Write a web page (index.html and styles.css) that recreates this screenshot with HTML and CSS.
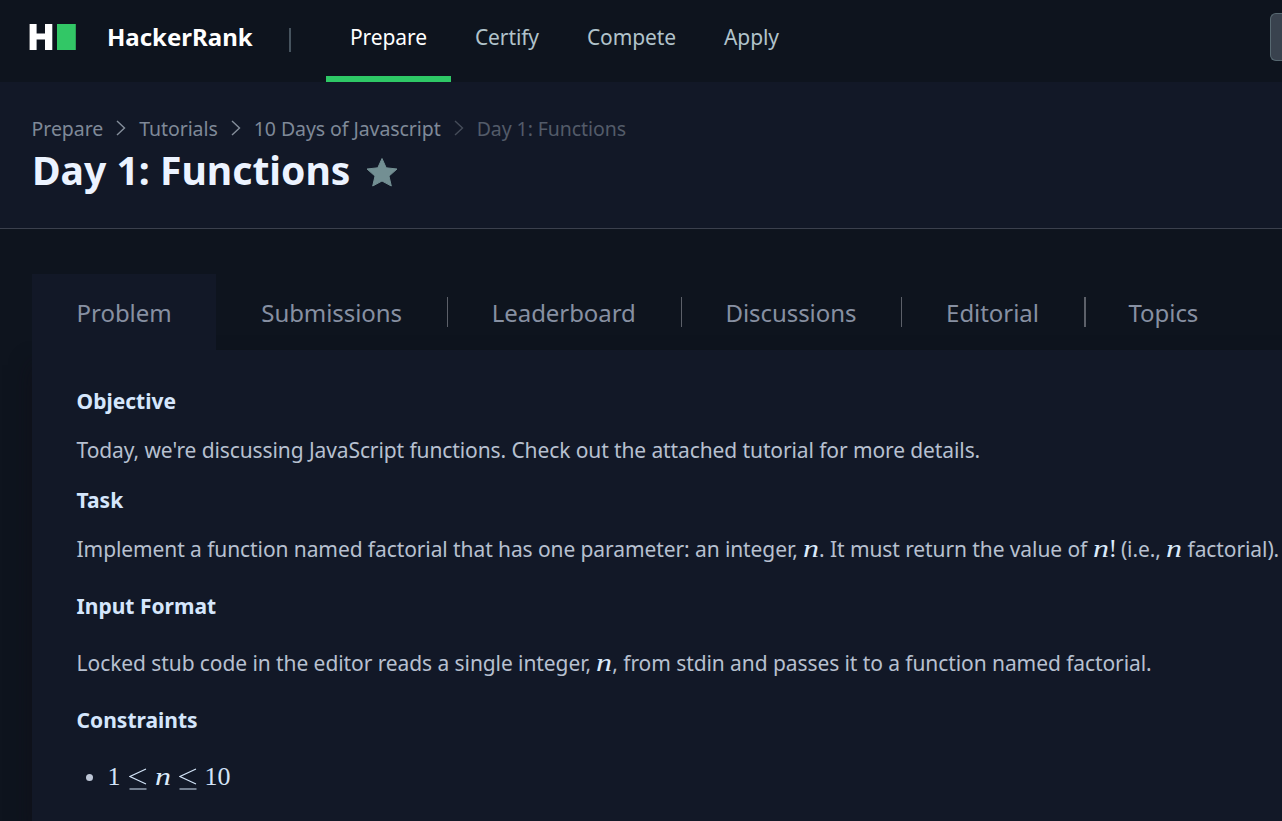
FILE: index.html
```
<!DOCTYPE html>
<html lang="en">
<head>
<meta charset="utf-8">
<title>Day 1: Functions | HackerRank</title>
<link rel="stylesheet" href="styles.css">
</head>
<body>
<header class="topbar">
  <a class="brand">
    <svg class="logo" width="48" height="26" viewBox="0 0 48 26"><path fill="#fff" d="M.6 0h7v9.600h8.400V0h7.300v26H16V15.600H7.600V26h-7z"/><path fill="#32c766" d="M28 0h18.800v26H28z"/></svg>
    <span class="brand-name">HackerRank</span>
  </a>
  <span class="separator"></span>
  <nav class="nav">
    <a class="nav-item active">Prepare</a>
    <a class="nav-item">Certify</a>
    <a class="nav-item">Compete</a>
    <a class="nav-item">Apply</a>
  </nav>
  <div class="search"></div>
</header>
<section class="heading">
  <div class="crumbs">
    <span>Prepare</span>
    <svg class="chevron" width="10" height="16" viewBox="0 0 10 16"><path d="M1 1l7.500 7L1 15"/></svg>
    <span>Tutorials</span>
    <svg class="chevron" width="10" height="16" viewBox="0 0 10 16"><path d="M1 1l7.500 7L1 15"/></svg>
    <span>10 Days of Javascript</span>
    <svg class="chevron dim" width="10" height="16" viewBox="0 0 10 16"><path d="M1 1l7.500 7L1 15"/></svg>
    <span class="dim">Day 1: Functions</span>
  </div>
  <div class="title-row">
    <h1>Day 1: Functions</h1>
    <svg class="star" width="32" height="30" viewBox="0 0 32 30"><path fill="#738f93" stroke="#738f93" stroke-linejoin="round" d="M16 1.500l4.200 9.300 10.800 1.200-8 7.100 2.300 9.900-9.300-5-9.300 5L9 19.100 1 12l10.800-1.200z"/></svg>
  </div>
</section>
<main class="content">
  <nav class="tabs">
    <a class="tab selected">Problem</a>
    <a class="tab">Submissions</a>
    <a class="tab ruled">Leaderboard</a>
    <a class="tab ruled">Discussions</a>
    <a class="tab ruled">Editorial</a>
    <a class="tab ruled thick">Topics</a>
  </nav>
  <article class="problem">
    <h2>Objective</h2>
    <p>Today, we're discussing JavaScript functions. Check out the attached tutorial for more details.</p>
    <h2>Task</h2>
    <p class="task">Implement a function named factorial that has one parameter: an integer, <i class="var">n</i>. It must return the value of <i class="var">n</i><span class="bang">!</span> (i.e., <i class="var">n</i> factorial).</p>
    <h2 class="spaced">Input Format</h2>
    <p class="spaced">Locked stub code in the editor reads a single integer, <i class="var">n</i>, from stdin and passes it to a function named factorial.</p>
    <h2 class="spaced">Constraints</h2>
    <ul class="constraints"><li><span class="math"><span>1</span><svg class="leq" width="18" height="22" viewBox="0 0 18 22"><path d="M17 1L1 8.500l16 7.500M.5 21h17"/></svg><i class="var">n</i><svg class="leq" width="18" height="22" viewBox="0 0 18 22"><path d="M17 1L1 8.500l16 7.500M.5 21h17"/></svg><span>10</span></span></li></ul>
  </article>
</main>
</body>
</html>
```
FILE: styles.css
```
* { box-sizing: border-box; }
body {
  margin: 0;
  height: 821px;
  overflow: hidden;
  background: #0e141e;
  color: #b7c0d0;
  font-family: "Noto Sans", sans-serif;
  font-size: 21px;
}
.topbar { display: flex; height: 82px; background: #0e141e; }
.brand { display: flex; align-items: flex-start; width: 288px; padding: 24px 0 0 29px; }
.logo { flex: none; }
.brand-name { margin: -1px 0 0 30px; line-height: 28px; font-size: 24px; font-weight: 700; color: #fff; }
.separator { width: 2px; height: 24px; margin: 28px 35.5px 0 .5px; background: #46535e; }
.nav { display: flex; flex: 1; letter-spacing: -.1px; }
.nav-item { height: 82px; padding: 23px 24px 0; line-height: 28px; color: #b1c3cb; white-space: nowrap; }
.nav-item.active { color: #fff; border-bottom: 6px solid #2ec866; }
.search { width: 12px; height: 48px; margin-top: 13px; border: 1px solid #576871; border-right: 0; border-radius: 6px 0 0 6px; background: #39424e; }
.heading { height: 147px; padding: 32px 32px 0; background: #121827; border-bottom: 1px solid #3b404d; }
.crumbs { display: flex; align-items: center; height: 28px; margin-left: -.4px; font-size: 19.5px; letter-spacing: -.07px; color: #7f8998; white-space: nowrap; }
.chevron { flex: none; margin: 0 13px; fill: none; stroke: #858e9b; stroke-width: 1.4; }
.chevron.dim { stroke: #454c59; }
span.dim { color: #535b69; }
.title-row { display: flex; }
h1 { margin: 0; font-size: 39.1px; line-height: 56px; color: #ecf3ff; white-space: nowrap; }
.star { margin: 15px 0 0 15px; }
.content { padding: 45px 0 0 32px; }
.tabs { display: flex; height: 76px; font-size: 24px; letter-spacing: -.06px; color: #8790a2; }
.tab { position: relative; padding: 0 44.85px; line-height: 78px; white-space: nowrap; }
.tab.selected { padding-left: 44.6px; background: #121827; }
.tab.ruled::before { content: ""; position: absolute; left: 0; top: 23px; width: 1px; height: 30px; background: #5c6069; }
.tab.thick::before { width: 2px; }
.problem { height: 471px; padding: 37px 0 0 44.6px; background: #121827; box-shadow: 0 15px 20px rgba(18, 12, 20, .5); white-space: nowrap; }
h2 { margin: 0 0 21px; font-size: 21px; line-height: 28px; color: #d5e6fc; }
p { margin: 0 0 22px; line-height: 28px; letter-spacing: -.1px; }
p.task { margin-bottom: 29px; letter-spacing: -.09px; }
h2.spaced { margin-bottom: 29px; }
p.spaced { margin-bottom: 29px; letter-spacing: -.08px; }
.var { display: inline-block; width: 16px; font: italic 25px/20px "Liberation Serif", serif; color: #dbeafa; transform: scaleX(1.28); transform-origin: left; }
.bang { display: inline-block; width: 7px; font: 26px/20px "Liberation Serif", serif; color: #dbeafa; }
.constraints { list-style: none; margin: 0; padding: 0 0 0 9px; }
.constraints li { display: flex; align-items: center; height: 28px; }
.constraints li::before { content: ""; width: 7px; height: 7px; margin-right: 15px; border-radius: 50%; background: #bdc6d6; }
.math { display: flex; align-items: center; font: 26px/28px "Liberation Serif", serif; color: #d3e4f8; }
.leq { margin: 3px 8px 0; fill: none; stroke: #d3e4f8; stroke-width: 1.1; }
```
